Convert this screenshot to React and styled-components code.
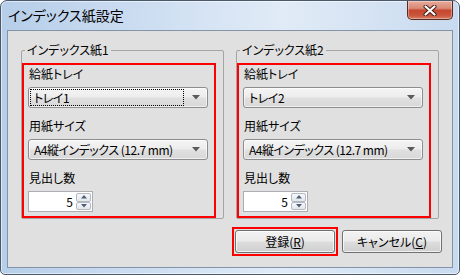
import React from 'react'
import styled, { createGlobalStyle } from 'styled-components'

const GlobalStyle = createGlobalStyle`
  html, body {
    margin: 0;
    padding: 0;
    background: #ffffff;
  }
  body {
    font-family: "Noto Sans CJK JP", "Noto Sans", sans-serif;
    font-size: 12px;
    color: #000;
  }
  * {
    box-sizing: border-box;
  }
`

const Window = styled.div`
    width: 460px;
    height: 275px;
    border: 1px solid #4b5a6b;
    border-radius: 7px 7px 5px 5px;
    background: linear-gradient(to right, #b6cee9 0%, #cfdff2 35%, #e1ebf7 62%, #c8daef 100%);
    box-shadow: inset 0 0 0 1px rgba(255,255,255,0.55);
    padding: 0 6px 6px;
    display: flex;
    flex-direction: column;
`

const TitleBar = styled.div`
    height: 29px;
    display: flex;
    justify-content: space-between;
    align-items: flex-start;
`

const Title = styled.div`
    font-size: 14px;
    line-height: 18px;
    padding: 5px 0 0 1px;
    font-feature-settings: "palt";
    color: #000;
`

const CloseButton = styled.div`
    width: 46px;
    height: 19px;
    border: 1px solid #5a2a21;
    border-top: none;
    border-radius: 0 0 5px 5px;
    background: linear-gradient(#e8ab9c 0%, #d98a76 40%, #c7472e 52%, #c9553d 80%, #d57d62 100%);
    box-shadow: inset 0 0 0 1px rgba(255,255,255,0.35);
    display: flex;
    align-items: center;
    justify-content: center;
`

const Client = styled.div`
    flex: 1;
    border: 1px solid #8394a8;
    background: #e0e0e0;
    display: flex;
    flex-direction: column;
    padding-top: 11px;
`

const GroupRow = styled.div`
    display: flex;
    gap: 12px;
    padding: 0 13px;
`

const Group = styled.fieldset`
    margin: 0;
    width: 203px;
    border: 1px solid #a5a5a5;
    border-radius: 2px;
    padding: 5px 7px 0 0;
    min-width: 0;
`

const Legend = styled.legend`
    margin-left: 3px;
    padding: 0 2px;
    line-height: 16px;
    font-size: 12px;
    font-feature-settings: "palt";
`

const Highlight = styled.div`
    border: 2px solid #ff0000;
    padding: 1px 0 4px 4px;
`

const Field = styled.div`
    & + & {
        margin-top: 10px;
    }
`

const Label = styled.div`
    line-height: 15px;
    margin: 0 0 6px 1px;
    font-feature-settings: "palt";
`

const Combo = styled.div`
    width: 180px;
    height: 21px;
    border: 1px solid #8d8d8d;
    border-radius: 3px;
    background: linear-gradient(#f5f5f5 0%, #ececec 48%, #e0e0e0 52%, #d8d8d8 100%);
    box-shadow: inset 0 0 0 1px rgba(255,255,255,0.6);
    display: flex;
    align-items: stretch;
    padding: 1px 0 1px 1px;
`

const ComboText = styled.div`
    flex: 1;
    border: 1px ${p => (p.$focused ? 'dotted #000' : 'solid transparent')};
    padding-left: 3px;
    line-height: 15px;
    white-space: nowrap;
    overflow: hidden;
    letter-spacing: -0.5px;
    font-feature-settings: "palt";
`

const ArrowBox = styled.div`
    width: 23px;
    display: flex;
    align-items: center;
    justify-content: center;
`

const Spinner = styled.div`
    width: 65px;
    height: 21px;
    border: 1px solid #abadb3;
    background: #fff;
    display: flex;
`

const SpinValue = styled.div`
    flex: 1;
    text-align: right;
    line-height: 19px;
    padding-right: 3px;
`

const SpinButtons = styled.div`
    width: 16px;
    display: flex;
    flex-direction: column;
    padding: 1px 1px 1px 0;
`

const SpinButton = styled.div`
    flex: 1;
    border: 1px solid #b4b9c2;
    border-radius: 2px;
    background: linear-gradient(#f7f8fa, #e3e6ea);
    display: flex;
    align-items: center;
    justify-content: center;
`

const ButtonRow = styled.div`
    display: flex;
    justify-content: flex-end;
    align-items: center;
    gap: 4px;
    margin-top: 8px;
    padding-right: 10px;
`

const FocusFrame = styled.div`
    border: 2px solid #ff0000;
    padding: 1px;
`

const Button = styled.div`
    width: 100px;
    height: 23px;
    border: 1px solid #707070;
    border-radius: 3px;
    background: linear-gradient(#f2f2f2 0%, #ebebeb 48%, #dddddd 52%, #cfcfcf 100%);
    box-shadow: inset 0 0 0 1px rgba(255,255,255,0.7);
    display: flex;
    align-items: center;
    justify-content: center;
    line-height: 21px;
    font-feature-settings: "palt";
`

const Mnemonic = styled.u`
    text-decoration: underline;
    text-underline-offset: 1px;
`

function DropArrow() {
    return (
        <svg width="8" height="5" viewBox="0 0 8 5">
            <path d="M0 0 H8 L4 4.5 Z" fill="#5a5a5a" />
        </svg>
    )
}

function SpinArrow({ up }) {
    return (
        <svg width="6" height="4" viewBox="0 0 6 4">
            <path d={up ? 'M3 0 L6 3.5 H0 Z' : 'M0 0 H6 L3 3.5 Z'} fill="#4b5f7e" />
        </svg>
    )
}

function CloseIcon() {
    return (
        <svg width="14" height="11" viewBox="0 0 14 11">
            <path d="M2.5 1.5 L11.5 9.5 M11.5 1.5 L2.5 9.5" stroke="#3b1a14" strokeWidth="4" strokeLinecap="round" />
            <path d="M2.5 1.5 L11.5 9.5 M11.5 1.5 L2.5 9.5" stroke="#ffffff" strokeWidth="2.2" strokeLinecap="round" />
        </svg>
    )
}

function IndexGroup({ title, tray, focused }) {
    return (
        <Group>
            <Legend>{title}</Legend>
            <Highlight>
                <Field>
                    <Label>給紙トレイ</Label>
                    <Combo>
                        <ComboText $focused={focused}>{tray}</ComboText>
                        <ArrowBox><DropArrow /></ArrowBox>
                    </Combo>
                </Field>
                <Field>
                    <Label>用紙サイズ</Label>
                    <Combo>
                        <ComboText>A4縦インデックス (12.7 mm)</ComboText>
                        <ArrowBox><DropArrow /></ArrowBox>
                    </Combo>
                </Field>
                <Field>
                    <Label>見出し数</Label>
                    <Spinner>
                        <SpinValue>5</SpinValue>
                        <SpinButtons>
                            <SpinButton><SpinArrow up /></SpinButton>
                            <SpinButton><SpinArrow /></SpinButton>
                        </SpinButtons>
                    </Spinner>
                </Field>
            </Highlight>
        </Group>
    )
}

export default function App() {
    return (
        <>
            <GlobalStyle />
            <Window>
                <TitleBar>
                    <Title>インデックス紙設定</Title>
                    <CloseButton><CloseIcon /></CloseButton>
                </TitleBar>
                <Client>
                    <GroupRow>
                        <IndexGroup title="インデックス紙1" tray="トレイ1" focused />
                        <IndexGroup title="インデックス紙2" tray="トレイ2" />
                    </GroupRow>
                    <ButtonRow>
                        <FocusFrame>
                            <Button>登録(<Mnemonic>R</Mnemonic>)</Button>
                        </FocusFrame>
                        <Button>キャンセル(<Mnemonic>C</Mnemonic>)</Button>
                    </ButtonRow>
                </Client>
            </Window>
        </>
    )
}
